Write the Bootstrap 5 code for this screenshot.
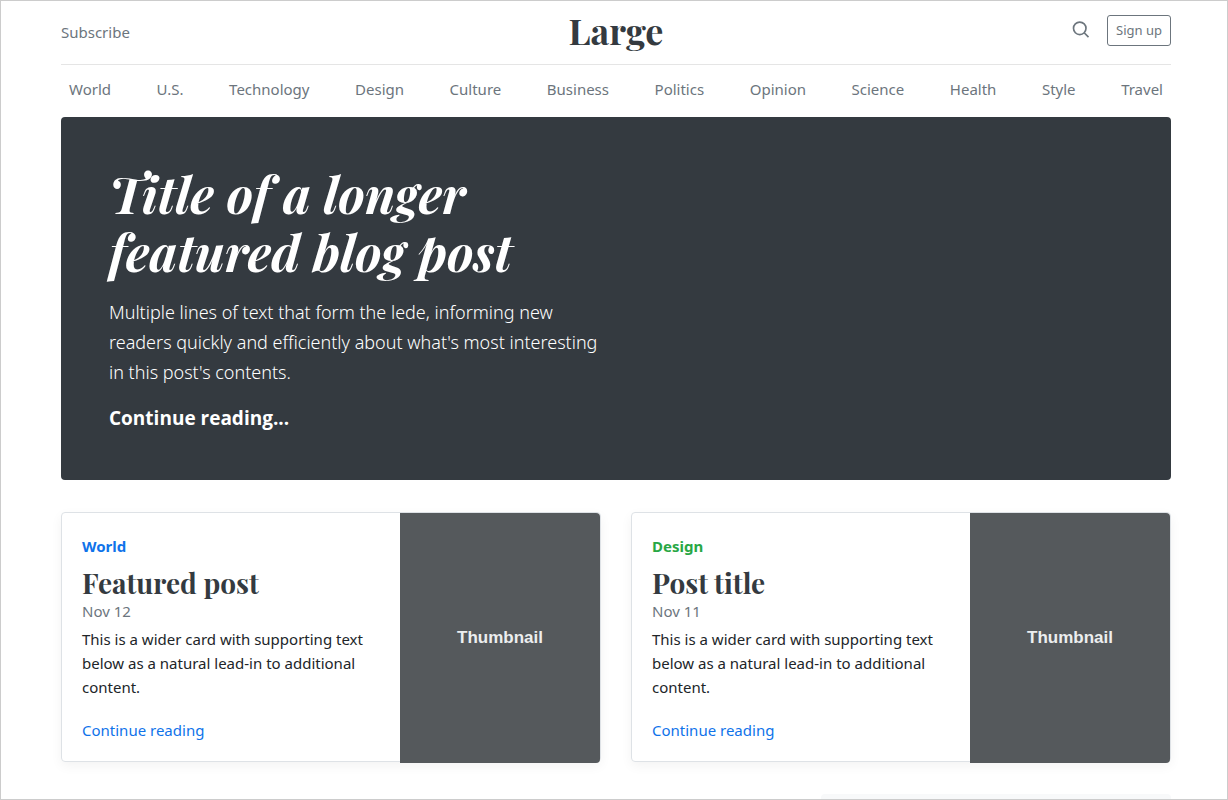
<!DOCTYPE html>
<html lang="en">
<head>
<meta charset="utf-8">
<meta name="viewport" content="width=device-width, initial-scale=1">
<title>Large</title>
<link href="https://cdn.jsdelivr.net/npm/bootstrap@5.3.0/dist/css/bootstrap.min.css" rel="stylesheet">
<style>
  body { font-family: "Segoe UI", "Noto Sans", "Open Sans", sans-serif; font-size: 15px; line-height: 24px; color: #212529; background: #fff; }
  a { text-decoration: none; color: #0f73ea; }
  .page-frame { border: 1px solid #ccc; padding: 0 56px 0 60px; }
  .serif-face { font-family: "Playfair Display", "Liberation Serif", serif; font-weight: 700; }
  .blog-header { border-bottom: 1px solid #e5e5e5; padding: 9px 0 10px; }
  .blog-logo { font-size: 36px; line-height: 40px; color: #343a40; }
  .muted-link, .muted-link:hover { color: #6c757d; }
  .btn-signup { --bs-btn-font-size: 13px; --bs-btn-line-height: 21px; --bs-btn-border-radius: 3px; --bs-btn-color: #6c757d; --bs-btn-border-color: #6c757d; --bs-btn-padding-x: 8px; --bs-btn-padding-y: 4px; }
  .nav-scroller { padding: 4px 0 8px; }
  .hero { background: #343a40; border-radius: 4px; padding: 48px 48px 47px; margin-bottom: 32px; color: #fff; }
  .hero h1 { font-size: 50px; line-height: 58px; font-style: oblique 20deg; font-feature-settings: "calt" 0, "swsh" 0, "liga" 0; }
  .hero-lede { font-size: 18px; line-height: 30px; font-weight: 300; }
  .hero-more { font-family: "Segoe UI", "Open Sans", "Noto Sans", sans-serif; font-size: 19px; line-height: 30px; }
  .post-row { --bs-gutter-x: 30px; }
  .post-card { height: 250px; border: 1px solid #dee2e6; border-radius: 4px; box-shadow: 0 4px 12px rgba(0,0,0,.05); margin-bottom: 32px; }
  .post-copy { padding: 21px 20px 19px; }
  .post-card h3 { font-size: 28px; line-height: 33px; color: #343a40; }
  .tag-blue { color: #0f73ea; }
  .tag-green { color: #28a745; }
  .thumb { width: 200px; height: 250px; background: #55595c; color: #eceeef; border-radius: 0 4px 4px 0; font: 700 17px/24px "Liberation Sans", Arial, sans-serif; }
  .about-box { background: #f8f9fa; border-radius: 4px; padding: 24px; min-height: 120px; }
</style>
</head>
<body>
<div class="page-frame vh-100 overflow-hidden">
  <header class="blog-header">
    <div class="row align-items-center">
      <div class="col-4"><a class="muted-link" href="#">Subscribe</a></div>
      <div class="col-4 text-center pb-1"><a class="blog-logo serif-face d-block" href="#">Large</a></div>
      <div class="col-4 d-flex justify-content-end align-items-center pb-1">
        <a class="muted-link mx-3 d-flex" href="#" aria-label="Search">
          <svg width="20" height="20" viewBox="0 0 24 24" fill="none" stroke="currentColor" stroke-width="2"><circle cx="10.5" cy="10" r="7.5"/><path d="M21 20.5l-5.2-5.2"/></svg>
        </a>
        <button type="button" class="btn btn-outline-secondary btn-signup">Sign up</button>
      </div>
    </div>
  </header>
  <div class="nav-scroller">
    <nav class="d-flex justify-content-between">
      <a class="p-2 muted-link" href="#">World</a>
      <a class="p-2 muted-link" href="#">U.S.</a>
      <a class="p-2 muted-link" href="#">Technology</a>
      <a class="p-2 muted-link" href="#">Design</a>
      <a class="p-2 muted-link" href="#">Culture</a>
      <a class="p-2 muted-link" href="#">Business</a>
      <a class="p-2 muted-link" href="#">Politics</a>
      <a class="p-2 muted-link" href="#">Opinion</a>
      <a class="p-2 muted-link" href="#">Science</a>
      <a class="p-2 muted-link" href="#">Health</a>
      <a class="p-2 muted-link" href="#">Style</a>
      <a class="p-2 muted-link" href="#">Travel</a>
    </nav>
  </div>
  <main>
    <section class="hero">
      <div class="col-md-6">
        <h1 class="serif-face mb-0">Title of a longer featured blog post</h1>
        <p class="hero-lede my-3">Multiple lines of text that form the lede, informing new readers quickly and efficiently about what's most interesting in this post's contents.</p>
        <p class="hero-more mb-0"><a class="text-white fw-bold" href="#">Continue reading...</a></p>
      </div>
    </section>
    <div class="row post-row">
      <div class="col-md-6">
        <article class="post-card d-flex">
          <div class="post-copy d-flex flex-column align-items-start flex-fill">
            <strong class="tag-blue mb-2">World</strong>
            <h3 class="serif-face mb-0">Featured post</h3>
            <div class="muted-link mb-1">Nov 12</div>
            <p class="mb-auto">This is a wider card with supporting text below as a natural lead-in to additional content.</p>
            <a href="#">Continue reading</a>
          </div>
          <div class="thumb flex-shrink-0 d-flex align-items-center justify-content-center">Thumbnail</div>
        </article>
      </div>
      <div class="col-md-6">
        <article class="post-card d-flex">
          <div class="post-copy d-flex flex-column align-items-start flex-fill">
            <strong class="tag-green mb-2">Design</strong>
            <h3 class="serif-face mb-0">Post title</h3>
            <div class="muted-link mb-1">Nov 11</div>
            <p class="mb-auto">This is a wider card with supporting text below as a natural lead-in to additional content.</p>
            <a href="#">Continue reading</a>
          </div>
          <div class="thumb flex-shrink-0 d-flex align-items-center justify-content-center">Thumbnail</div>
        </article>
      </div>
    </div>
    <div class="row post-row">
      <div class="col-md-4 offset-md-8"><aside class="about-box"></aside></div>
    </div>
  </main>
</div>
<script src="https://cdn.jsdelivr.net/npm/bootstrap@5.3.0/dist/js/bootstrap.bundle.min.js"></script>
</body>
</html>
